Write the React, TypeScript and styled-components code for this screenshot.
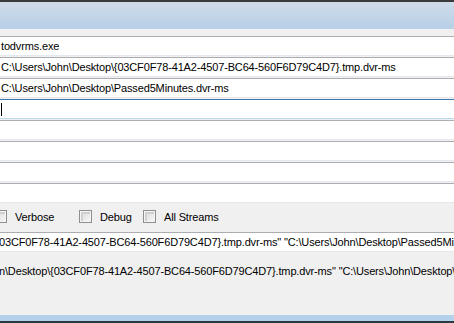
import React from "react";
import styled, { createGlobalStyle } from "styled-components";

const Global = createGlobalStyle`
  html, body { margin: 0; padding: 0; }
  body {
    width: 454px;
    height: 323px;
    overflow: hidden;
    background: #f0f0f0;
    font-family: "Liberation Sans", Arial, sans-serif;
    font-size: 11px;
    letter-spacing: -0.15px;
    color: #000;
  }
`;

const Window = styled.div`
  width: 454px;
  height: 323px;
  display: flex;
  flex-direction: column;
  overflow: hidden;
  background: #f0f0f0;
`;

const TitleBar = styled.div`
  height: 27px;
  border-top: 2px solid #3a3a3a;
  background: linear-gradient(#cfdbe8, #b7cfe8);
  flex: none;
`;

const FieldList = styled.div`
  display: flex;
  flex-direction: column;
  gap: 1px;
  margin-top: 7px;
  flex: none;
`;

const Field = styled.div<{ $focused?: boolean }>`
  height: 18px;
  line-height: 18px;
  background: #fff;
  border-top: 1px solid ${(p) => (p.$focused ? "#3d7bad" : "#abadb3")};
  border-bottom: 1px solid ${(p) => (p.$focused ? "#b7d9ed" : "#e3e9ef")};
  padding-left: 1px;
  white-space: nowrap;
  overflow: hidden;
  display: flex;
  align-items: center;
`;

const Caret = styled.span`
  display: inline-block;
  width: 1px;
  height: 13px;
  background: #000;
`;

const Options = styled.div`
  display: flex;
  align-items: center;
  height: 13px;
  margin-top: 7px;
  margin-left: -6px;
  flex: none;
`;

const Option = styled.label<{ $width?: number }>`
  display: flex;
  align-items: center;
  gap: 8px;
  width: ${(p) => (p.$width ? `${p.$width}px` : "auto")};
  flex: none;
  white-space: nowrap;
`;

const Box = styled.span`
  width: 11px;
  height: 11px;
  border: 1px solid #8e8f8f;
  background: linear-gradient(135deg, #d8d8d8, #f8f8f8);
  box-shadow: inset 0 0 0 1px #f4f4f4, inset 1px 1px 0 2px #d0d0d0;
  flex: none;
`;

const CommandBox = styled.div`
  margin-top: 9px;
  height: 18px;
  line-height: 18px;
  background: #fff;
  border-top: 1px solid #abadb3;
  border-bottom: 1px solid #e3e9ef;
  white-space: nowrap;
  overflow: hidden;
  text-indent: -1px;
  flex: none;
`;

const Status = styled.div`
  margin-top: 12px;
  height: 14px;
  line-height: 14px;
  white-space: nowrap;
  overflow: hidden;
  text-indent: -1px;
  flex: none;
`;

const Spacer = styled.div`
  flex: 1;
`;

const BottomBar = styled.div`
  height: 6px;
  background: #b4d0eb;
  border-bottom: 2px solid #2c3a40;
  flex: none;
`;

const tmp = "C:\\Users\\John\\Desktop\\{03CF0F78-41A2-4507-BC64-560F6D79C4D7}.tmp.dvr-ms";
const out = "C:\\Users\\John\\Desktop\\Passed5Minutes.dvr-ms";

export default function App() {
  return (
    <>
      <Global />
      <Window>
        <TitleBar />
        <FieldList>
          <Field>todvrms.exe</Field>
          <Field>{tmp}</Field>
          <Field>{out}</Field>
          <Field $focused>
            <Caret />
          </Field>
          <Field />
          <Field />
          <Field />
          <Field />
        </FieldList>
        <Options>
          <Option $width={85}>
            <Box />
            Verbose
          </Option>
          <Option $width={64}>
            <Box />
            Debug
          </Option>
          <Option>
            <Box />
            All Streams
          </Option>
        </Options>
        <CommandBox>
          03CF0F78-41A2-4507-BC64-560F6D79C4D7{"}"}.tmp.dvr-ms" "{out}"
        </CommandBox>
        <Status>
          n\Desktop\{"{"}03CF0F78-41A2-4507-BC64-560F6D79C4D7{"}"}.tmp.dvr-ms" "{out}"
        </Status>
        <Spacer />
        <BottomBar />
      </Window>
    </>
  );
}
